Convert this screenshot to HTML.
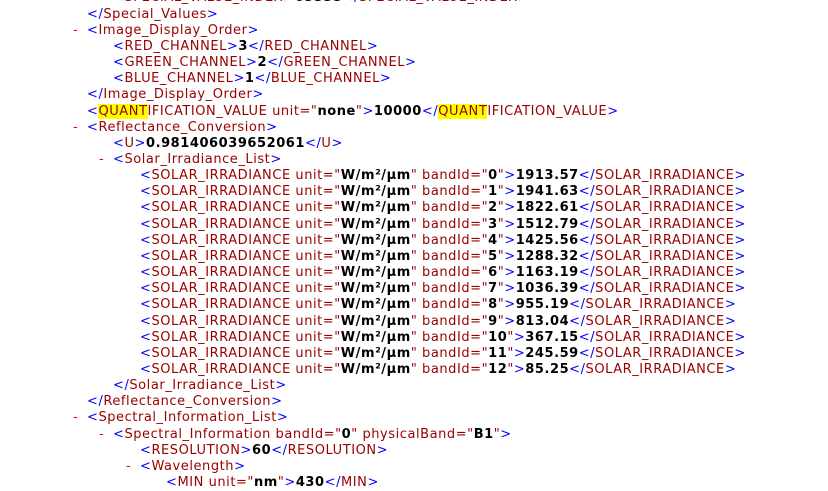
<!DOCTYPE html>
<html><head><meta charset="utf-8"><style>
body{margin:0;background:#fff;width:828px;height:491px;overflow:hidden;position:relative;font-family:"DejaVu Sans",Verdana,sans-serif;font-size:13px;letter-spacing:0.55px;}
.c{position:absolute;left:0;top:-9.6px;}
.l{height:16.17px;line-height:16.17px;white-space:nowrap;position:relative;}
.b{color:#0000ff}.t{color:#990000}.x{color:#000;font-weight:bold}.a{color:#990000}
.d{color:#ff0000;position:absolute;}
.h{background:#ffff00}
</style></head><body><div class="c">
<div class="l" style="padding-left:113px"><span class="b">&lt;</span><span class="t">SPECIAL_VALUE_INDEX</span><span class="b">&gt;</span><span class="x">65535</span><span class="b">&lt;/</span><span class="t">SPECIAL_VALUE_INDEX</span><span class="b">&gt;</span></div>
<div class="l" style="padding-left:87px"><span class="b">&lt;/</span><span class="t">Special_Values</span><span class="b">&gt;</span></div>
<div class="l" style="padding-left:87px"><span class="d" style="left:73px">-</span><span class="b">&lt;</span><span class="t">Image_Display_Order</span><span class="b">&gt;</span></div>
<div class="l" style="padding-left:113px"><span class="b">&lt;</span><span class="t">RED_CHANNEL</span><span class="b">&gt;</span><span class="x">3</span><span class="b">&lt;/</span><span class="t">RED_CHANNEL</span><span class="b">&gt;</span></div>
<div class="l" style="padding-left:113px"><span class="b">&lt;</span><span class="t">GREEN_CHANNEL</span><span class="b">&gt;</span><span class="x">2</span><span class="b">&lt;/</span><span class="t">GREEN_CHANNEL</span><span class="b">&gt;</span></div>
<div class="l" style="padding-left:113px"><span class="b">&lt;</span><span class="t">BLUE_CHANNEL</span><span class="b">&gt;</span><span class="x">1</span><span class="b">&lt;/</span><span class="t">BLUE_CHANNEL</span><span class="b">&gt;</span></div>
<div class="l" style="padding-left:87px"><span class="b">&lt;/</span><span class="t">Image_Display_Order</span><span class="b">&gt;</span></div>
<div class="l" style="padding-left:87px"><span class="b">&lt;</span><span class="t"><span class="h">QUANT</span>IFICATION_VALUE</span><span class="a"> unit="</span><span class="x">none</span><span class="a">"</span><span class="b">&gt;</span><span class="x">10000</span><span class="b">&lt;/</span><span class="t"><span class="h">QUANT</span>IFICATION_VALUE</span><span class="b">&gt;</span></div>
<div class="l" style="padding-left:87px"><span class="d" style="left:73px">-</span><span class="b">&lt;</span><span class="t">Reflectance_Conversion</span><span class="b">&gt;</span></div>
<div class="l" style="padding-left:113px"><span class="b">&lt;</span><span class="t">U</span><span class="b">&gt;</span><span class="x">0.981406039652061</span><span class="b">&lt;/</span><span class="t">U</span><span class="b">&gt;</span></div>
<div class="l" style="padding-left:113px"><span class="d" style="left:99px">-</span><span class="b">&lt;</span><span class="t">Solar_Irradiance_List</span><span class="b">&gt;</span></div>
<div class="l" style="padding-left:140px"><span class="b">&lt;</span><span class="t">SOLAR_IRRADIANCE</span><span class="a"> unit="</span><span class="x">W/m²/µm</span><span class="a">" bandId="</span><span class="x">0</span><span class="a">"</span><span class="b">&gt;</span><span class="x">1913.57</span><span class="b">&lt;/</span><span class="t">SOLAR_IRRADIANCE</span><span class="b">&gt;</span></div>
<div class="l" style="padding-left:140px"><span class="b">&lt;</span><span class="t">SOLAR_IRRADIANCE</span><span class="a"> unit="</span><span class="x">W/m²/µm</span><span class="a">" bandId="</span><span class="x">1</span><span class="a">"</span><span class="b">&gt;</span><span class="x">1941.63</span><span class="b">&lt;/</span><span class="t">SOLAR_IRRADIANCE</span><span class="b">&gt;</span></div>
<div class="l" style="padding-left:140px"><span class="b">&lt;</span><span class="t">SOLAR_IRRADIANCE</span><span class="a"> unit="</span><span class="x">W/m²/µm</span><span class="a">" bandId="</span><span class="x">2</span><span class="a">"</span><span class="b">&gt;</span><span class="x">1822.61</span><span class="b">&lt;/</span><span class="t">SOLAR_IRRADIANCE</span><span class="b">&gt;</span></div>
<div class="l" style="padding-left:140px"><span class="b">&lt;</span><span class="t">SOLAR_IRRADIANCE</span><span class="a"> unit="</span><span class="x">W/m²/µm</span><span class="a">" bandId="</span><span class="x">3</span><span class="a">"</span><span class="b">&gt;</span><span class="x">1512.79</span><span class="b">&lt;/</span><span class="t">SOLAR_IRRADIANCE</span><span class="b">&gt;</span></div>
<div class="l" style="padding-left:140px"><span class="b">&lt;</span><span class="t">SOLAR_IRRADIANCE</span><span class="a"> unit="</span><span class="x">W/m²/µm</span><span class="a">" bandId="</span><span class="x">4</span><span class="a">"</span><span class="b">&gt;</span><span class="x">1425.56</span><span class="b">&lt;/</span><span class="t">SOLAR_IRRADIANCE</span><span class="b">&gt;</span></div>
<div class="l" style="padding-left:140px"><span class="b">&lt;</span><span class="t">SOLAR_IRRADIANCE</span><span class="a"> unit="</span><span class="x">W/m²/µm</span><span class="a">" bandId="</span><span class="x">5</span><span class="a">"</span><span class="b">&gt;</span><span class="x">1288.32</span><span class="b">&lt;/</span><span class="t">SOLAR_IRRADIANCE</span><span class="b">&gt;</span></div>
<div class="l" style="padding-left:140px"><span class="b">&lt;</span><span class="t">SOLAR_IRRADIANCE</span><span class="a"> unit="</span><span class="x">W/m²/µm</span><span class="a">" bandId="</span><span class="x">6</span><span class="a">"</span><span class="b">&gt;</span><span class="x">1163.19</span><span class="b">&lt;/</span><span class="t">SOLAR_IRRADIANCE</span><span class="b">&gt;</span></div>
<div class="l" style="padding-left:140px"><span class="b">&lt;</span><span class="t">SOLAR_IRRADIANCE</span><span class="a"> unit="</span><span class="x">W/m²/µm</span><span class="a">" bandId="</span><span class="x">7</span><span class="a">"</span><span class="b">&gt;</span><span class="x">1036.39</span><span class="b">&lt;/</span><span class="t">SOLAR_IRRADIANCE</span><span class="b">&gt;</span></div>
<div class="l" style="padding-left:140px"><span class="b">&lt;</span><span class="t">SOLAR_IRRADIANCE</span><span class="a"> unit="</span><span class="x">W/m²/µm</span><span class="a">" bandId="</span><span class="x">8</span><span class="a">"</span><span class="b">&gt;</span><span class="x">955.19</span><span class="b">&lt;/</span><span class="t">SOLAR_IRRADIANCE</span><span class="b">&gt;</span></div>
<div class="l" style="padding-left:140px"><span class="b">&lt;</span><span class="t">SOLAR_IRRADIANCE</span><span class="a"> unit="</span><span class="x">W/m²/µm</span><span class="a">" bandId="</span><span class="x">9</span><span class="a">"</span><span class="b">&gt;</span><span class="x">813.04</span><span class="b">&lt;/</span><span class="t">SOLAR_IRRADIANCE</span><span class="b">&gt;</span></div>
<div class="l" style="padding-left:140px"><span class="b">&lt;</span><span class="t">SOLAR_IRRADIANCE</span><span class="a"> unit="</span><span class="x">W/m²/µm</span><span class="a">" bandId="</span><span class="x">10</span><span class="a">"</span><span class="b">&gt;</span><span class="x">367.15</span><span class="b">&lt;/</span><span class="t">SOLAR_IRRADIANCE</span><span class="b">&gt;</span></div>
<div class="l" style="padding-left:140px"><span class="b">&lt;</span><span class="t">SOLAR_IRRADIANCE</span><span class="a"> unit="</span><span class="x">W/m²/µm</span><span class="a">" bandId="</span><span class="x">11</span><span class="a">"</span><span class="b">&gt;</span><span class="x">245.59</span><span class="b">&lt;/</span><span class="t">SOLAR_IRRADIANCE</span><span class="b">&gt;</span></div>
<div class="l" style="padding-left:140px"><span class="b">&lt;</span><span class="t">SOLAR_IRRADIANCE</span><span class="a"> unit="</span><span class="x">W/m²/µm</span><span class="a">" bandId="</span><span class="x">12</span><span class="a">"</span><span class="b">&gt;</span><span class="x">85.25</span><span class="b">&lt;/</span><span class="t">SOLAR_IRRADIANCE</span><span class="b">&gt;</span></div>
<div class="l" style="padding-left:113px"><span class="b">&lt;/</span><span class="t">Solar_Irradiance_List</span><span class="b">&gt;</span></div>
<div class="l" style="padding-left:87px"><span class="b">&lt;/</span><span class="t">Reflectance_Conversion</span><span class="b">&gt;</span></div>
<div class="l" style="padding-left:87px"><span class="d" style="left:73px">-</span><span class="b">&lt;</span><span class="t">Spectral_Information_List</span><span class="b">&gt;</span></div>
<div class="l" style="padding-left:113px"><span class="d" style="left:99px">-</span><span class="b">&lt;</span><span class="t">Spectral_Information</span><span class="a"> bandId="</span><span class="x">0</span><span class="a">" physicalBand="</span><span class="x">B1</span><span class="a">"</span><span class="b">&gt;</span></div>
<div class="l" style="padding-left:140px"><span class="b">&lt;</span><span class="t">RESOLUTION</span><span class="b">&gt;</span><span class="x">60</span><span class="b">&lt;/</span><span class="t">RESOLUTION</span><span class="b">&gt;</span></div>
<div class="l" style="padding-left:140px"><span class="d" style="left:126px">-</span><span class="b">&lt;</span><span class="t">Wavelength</span><span class="b">&gt;</span></div>
<div class="l" style="padding-left:166px"><span class="b">&lt;</span><span class="t">MIN</span><span class="a"> unit="</span><span class="x">nm</span><span class="a">"</span><span class="b">&gt;</span><span class="x">430</span><span class="b">&lt;/</span><span class="t">MIN</span><span class="b">&gt;</span></div>
</div></body></html>
